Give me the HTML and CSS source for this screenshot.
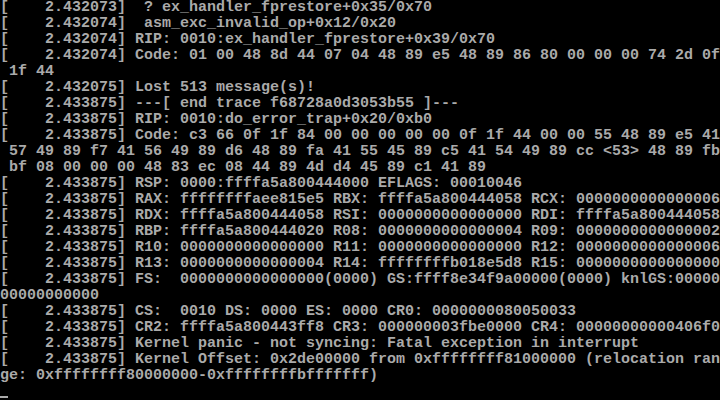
FILE: index.html
```html
<!DOCTYPE html>
<html>
<head lang="en">
    <meta charset="UTF-8">
    <title>console</title>
    <link rel="stylesheet" href="styles.css">
</head>
<body>
<div class="screen">
<pre class="log">[    2.432073]  ? ex_handler_fprestore+0x35/0x70
[    2.432074]  asm_exc_invalid_op+0x12/0x20
[    2.432074] RIP: 0010:ex_handler_fprestore+0x39/0x70
[    2.432074] Code: 01 00 48 8d 44 07 04 48 89 e5 48 89 86 80 00 00 00 74 2d 0f
 1f 44
[    2.432075] Lost 513 message(s)!
[    2.433875] ---[ end trace f68728a0d3053b55 ]---
[    2.433875] RIP: 0010:do_error_trap+0x20/0xb0
[    2.433875] Code: c3 66 0f 1f 84 00 00 00 00 00 0f 1f 44 00 00 55 48 89 e5 41
 57 49 89 f7 41 56 49 89 d6 48 89 fa 41 55 45 89 c5 41 54 49 89 cc &lt;53&gt; 48 89 fb
 bf 08 00 00 00 48 83 ec 08 44 89 4d d4 45 89 c1 41 89
[    2.433875] RSP: 0000:ffffa5a800444000 EFLAGS: 00010046
[    2.433875] RAX: ffffffffaee815e5 RBX: ffffa5a800444058 RCX: 0000000000000006
[    2.433875] RDX: ffffa5a800444058 RSI: 0000000000000000 RDI: ffffa5a800444058
[    2.433875] RBP: ffffa5a800444020 R08: 0000000000000004 R09: 0000000000000002
[    2.433875] R10: 0000000000000000 R11: 0000000000000000 R12: 0000000000000006
[    2.433875] R13: 0000000000000004 R14: ffffffffb018e5d8 R15: 0000000000000000
[    2.433875] FS:  0000000000000000(0000) GS:ffff8e34f9a00000(0000) knlGS:00000
00000000000
[    2.433875] CS:  0010 DS: 0000 ES: 0000 CR0: 0000000080050033
[    2.433875] CR2: ffffa5a800443ff8 CR3: 000000003fbe0000 CR4: 00000000000406f0
[    2.433875] Kernel panic - not syncing: Fatal exception in interrupt
[    2.433875] Kernel Offset: 0x2de00000 from 0xffffffff81000000 (relocation ran
ge: 0xffffffff80000000-0xffffffffbfffffff)
<span class="cursor"></span></pre>
</div>
</body>
</html>
```

FILE: styles.css
```css
* {
    padding: 0;
    margin: 0;
}
body,html{
    width: 100%;
    height: 100%;
    background: #000;
    overflow: hidden;
}
.screen{
    width: 720px;
    height: 400px;
    background: #000;
}
.log{
    font-family: "Liberation Mono", "DejaVu Sans Mono", monospace;
    font-size: 15px;
    font-weight: bold;
    line-height: 16px;
    color: #aaa;
    white-space: pre;
}
.cursor{
    display: inline-block;
    width: 8px;
    height: 2px;
    background: #aaa;
    vertical-align: top;
    margin-top: 12px;
}
```
